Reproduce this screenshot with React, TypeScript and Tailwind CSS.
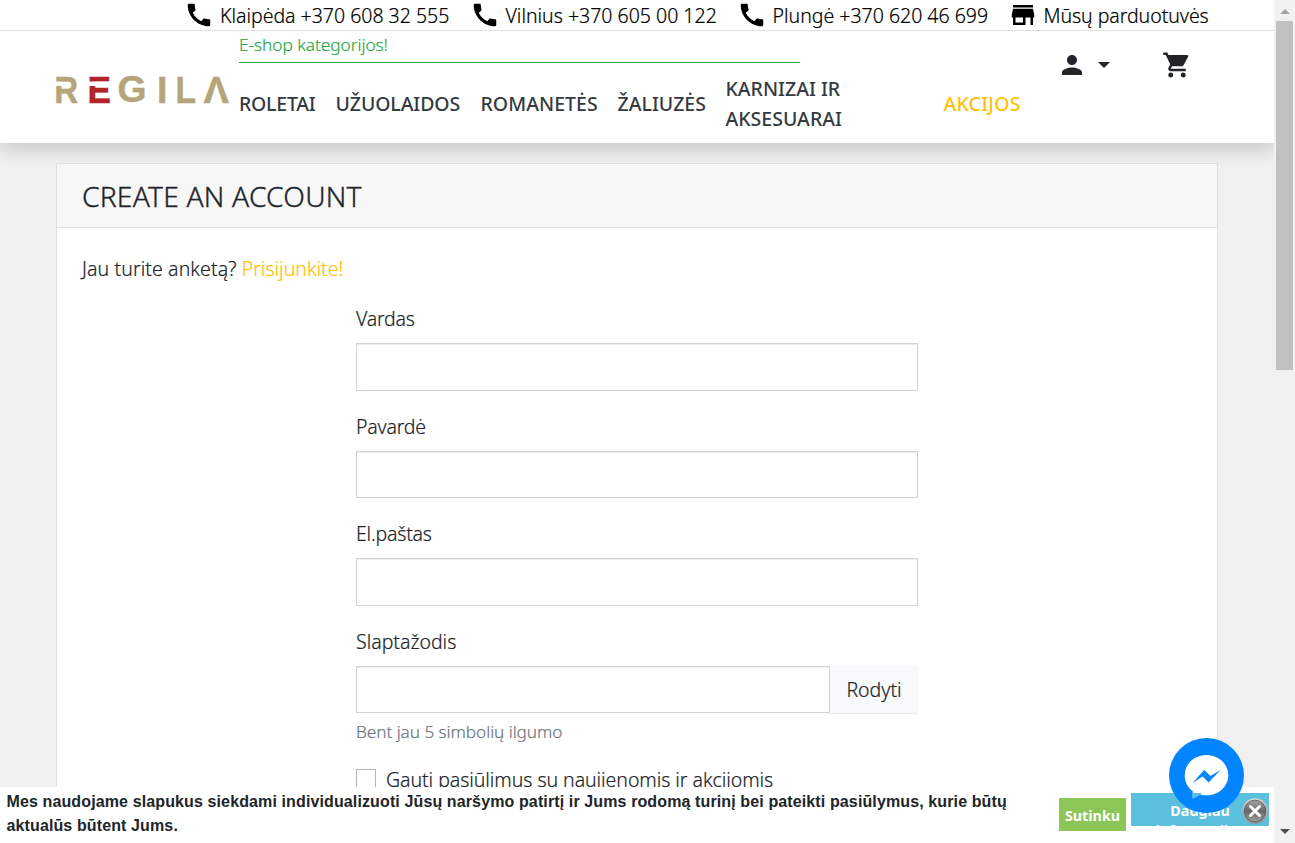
import type { ReactNode } from "react";
import { MdCall, MdStore, MdPerson, MdShoppingCart } from "react-icons/md";

function Logo() {
  return (
    <svg
      width="174"
      height="30"
      viewBox="0 0 174 30"
      className="block overflow-visible"
      fontFamily="Liberation Sans, Arial, sans-serif"
      fontWeight="700"
      fontSize="37.5"
      fill="#b6a57a"
      stroke="#b6a57a"
      strokeWidth="0.5"
    >
      <text x="-1.700" y="27.500" textLength="24" lengthAdjust="spacingAndGlyphs">R</text>
      <text x="31.500" y="27.500" textLength="23.500" lengthAdjust="spacingAndGlyphs" fill="#b22427" stroke="#b22427">E</text>
      <text x="61.500" y="27" fontSize="36" textLength="29" lengthAdjust="spacingAndGlyphs">G</text>
      <text x="101" y="27.500">I</text>
      <text x="119.500" y="27.500" textLength="20.500" lengthAdjust="spacingAndGlyphs">L</text>
      <text x="147.500" y="27.500" textLength="25.500" lengthAdjust="spacingAndGlyphs">Λ</text>
      <rect x="-1" y="6.500" width="7" height="4.500" fill="#fff" stroke="none" />
      <rect x="32" y="6.500" width="22" height="4.500" fill="#fff" stroke="none" />
    </svg>
  );
}

function Contact({ icon, children, className }: { icon: ReactNode; children: ReactNode; className: string }) {
  return (
    <a className={"flex items-center gap-[6px] text-black " + className}>
      {icon}
      <span className="pt-[2px] leading-[30px]">{children}</span>
    </a>
  );
}

function Field({ label }: { label: string }) {
  return (
    <div className="h-[107.6px]">
      <label className="block h-[39px] leading-[30px] tracking-[-0.2px]">{label}</label>
      <input className="block h-[47.6px] w-[562px] border border-[#ced4da] bg-white shadow-[inset_0_1px_1px_rgba(0,0,0,0.075)]" />
    </div>
  );
}

function Messenger() {
  return (
    <svg width="75" height="75" viewBox="0 0 75 75" className="block">
      <circle cx="37.500" cy="37.500" r="37.500" fill="#0084ff" />
      <path d="M37.500 17C25.200 17 15.700 26 15.700 37.200c0 6.500 3 12.200 8 15.900V60.500l7.500-4.100c2 .6 4.100.9 6.300.9 12.300 0 21.800-9 21.800-20.100S49.800 17 37.500 17Z" fill="#fff" />
      <path d="M23.700 55H33l-1.800 1.400-7.500 4.100Z" fill="#5bc0de" />
      <path d="M23.500 45 35.200 32l6.300 6 10-6L39.600 44.500l-6-6Z" fill="#0084ff" />
    </svg>
  );
}

function CloseIcon() {
  return (
    <svg width="26" height="26" viewBox="0 0 26 26" className="block">
      <defs>
        <linearGradient id="rim" x1="0" y1="0" x2="0" y2="1">
          <stop offset="0" stopColor="#d8d8d8" />
          <stop offset="1" stopColor="#8c8c8c" />
        </linearGradient>
        <linearGradient id="disc" x1="0" y1="0" x2="0" y2="1">
          <stop offset="0" stopColor="#a6a6a6" />
          <stop offset=".5" stopColor="#666" />
          <stop offset="1" stopColor="#a0a0a0" />
        </linearGradient>
      </defs>
      <circle cx="13" cy="13" r="12.700" fill="url(#rim)" />
      <circle cx="13" cy="13" r="10.800" fill="url(#disc)" stroke="#555" strokeWidth="0.8" />
      <path d="m8.500 8.500 9 9m0-9-9 9" stroke="#fff" strokeWidth="3" strokeLinecap="round" />
    </svg>
  );
}

export default function App() {
  return (
    <div className="relative flex h-[843px] w-[1295px] overflow-hidden bg-[#f0f0f0] font-['Noto_Sans',sans-serif] text-[19.5px] font-light text-[#212529] [-webkit-text-stroke:0.2px]">
      <div className="flex h-full w-[1274px] flex-col">
        <header className="relative z-10 h-[143px] shrink-0 bg-white shadow-[0_8px_16px_rgba(0,0,0,0.15)]">
          <div className="flex h-[31px] items-center border-b border-[#dee2e6] pl-[184px]">
            <Contact className="w-[285.5px] tracking-[-0.01px]" icon={<MdCall size={30} />}>Klaipėda +370 608 32 555</Contact>
            <Contact className="w-[267px]" icon={<MdCall size={30} />}>Vilnius +370 605 00 122</Contact>
            <Contact className="w-[271px]" icon={<MdCall size={30} />}>Plungė +370 620 46 699</Contact>
            <Contact className="tracking-[-0.05px]" icon={<MdStore size={30} />}>Mūsų parduotuvės</Contact>
          </div>
          <div className="flex h-[112px] pl-[56px]">
            <div className="w-[183px] pt-[44px]">
              <Logo />
            </div>
            <div className="w-[810px]">
              <div className="h-[32px] w-[561px] border-b border-[#28a745] text-[17.3px] leading-[28px] tracking-[-0.05px] text-[#28a745]">E-shop kategorijos!</div>
              <nav className="flex h-[80px] items-center pt-[2px] font-medium text-[#343a40] leading-[30px] [-webkit-text-stroke:0]">
                <a className="w-[96.5px] tracking-[-0.25px]">ROLETAI</a>
                <a className="w-[145px] tracking-[-0.1px]">UŽUOLAIDOS</a>
                <a className="w-[137px] tracking-[0.05px]">ROMANETĖS</a>
                <a className="w-[108px]">ŽALIUZĖS</a>
                <a className="w-[218px]">KARNIZAI IR<br />AKSESUARAI</a>
                <a className="text-[#ffc107] tracking-[0.2px]">AKCIJOS</a>
              </nav>
            </div>
            <div className="flex h-[68px] items-center pl-[8px]">
              <MdPerson size={30} />
              <svg width="12" height="6" viewBox="0 0 12 6" className="ml-[11px]"><path d="M0 0h12L6 6Z" fill="#212529" /></svg>
              <MdShoppingCart size={30} className="ml-[52px]" />
            </div>
          </div>
        </header>

        <main className="mt-[20px] ml-[56px] h-[900px] w-[1162px] border border-[#dfdfdf] bg-white">
          <h1 className="h-[64px] border-b border-[#dfdfdf] bg-[#f7f7f7] pl-[25px] text-[28.2px] leading-[64px] tracking-[0.2px] [-webkit-text-stroke:0.35px]">CREATE AN ACCOUNT</h1>
          <div className="pl-[25px] pt-[26px]">
            <p className="leading-[30px]">
              <span className="tracking-[0.1px]">Jau turite anketą?</span> <a className="text-[#ffc107]">Prisijunkite!</a>
            </p>
          </div>
          <form className="ml-[299px] w-[562px] pt-[20px]">
            <Field label="Vardas" />
            <Field label="Pavardė" />
            <Field label="El.paštas" />
            <label className="block h-[39px] leading-[30px]">Slaptažodis</label>
            <div className="flex">
              <input className="h-[47.6px] w-[474px] border border-[#ced4da] bg-white shadow-[inset_0_1px_1px_rgba(0,0,0,0.075)]" />
              <button type="button" className="h-[47.6px] w-[88px] bg-[#f8f9fa] shadow-[0_1px_1px_rgba(0,0,0,0.075)]">Rodyti</button>
            </div>
            <div className="pt-[5px] text-[17.2px] leading-[28px] tracking-[-0.05px] text-[#6c757d]">Bent jau 5 simbolių ilgumo</div>
            <label className="mt-[19px] flex items-start gap-[10px]">
              <span className="mt-[4px] h-[20px] w-[20px] border border-[#adb5bd] bg-white" />
              <span className="leading-[30px] tracking-[-0.05px]">Gauti pasiūlimus su naujienomis ir akcijomis</span>
            </label>
          </form>
        </main>
      </div>

      <aside className="z-20 flex h-full w-[21px] flex-col items-center bg-[#f1f1f1]">
        <svg width="10" height="5" viewBox="0 0 10 5" className="mt-[9px]"><path d="M0 5h10L5 0Z" fill="#a3a3a3" /></svg>
        <div className="mt-[7px] h-[349px] w-[17px] bg-[#c1c1c1]" />
        <svg width="10" height="5" viewBox="0 0 10 5" className="mt-auto mb-[9px]"><path d="M0 0h10L5 5Z" fill="#505050" /></svg>
      </aside>

      <div className="absolute bottom-0 left-0 z-10 flex h-[56px] w-[1274px] bg-white [-webkit-text-stroke:0]">
        <p className="w-[1053px] pl-[6.5px] pt-[3px] font-['Liberation_Sans',sans-serif] text-[16px] leading-[24px] font-bold tracking-[0.12px]">
          Mes naudojame slapukus siekdami individualizuoti Jūsų naršymo patirtį ir Jums rodomą turinį bei pateikti pasiūlymus, kurie būtų<br />
          aktualūs būtent Jums.
        </p>
        <button className="mt-[11px] ml-[6px] h-[33px] w-[67px] bg-[#8cc657] pt-[2px] text-[14.3px] font-bold text-white">Sutinku</button>
        <button className="mt-[6px] ml-[5px] flex h-[33px] w-[138px] flex-col items-center overflow-hidden bg-[#5bc0de] pt-[8px] text-[14.3px] leading-[19.5px] font-bold text-white">
          <span>Daugiau</span>
          <span>informacijos</span>
        </button>
      </div>
      <div className="absolute left-[1242px] top-[798px] z-30"><CloseIcon /></div>
      <div className="absolute left-[1169px] top-[738px] z-20"><Messenger /></div>
    </div>
  );
}
